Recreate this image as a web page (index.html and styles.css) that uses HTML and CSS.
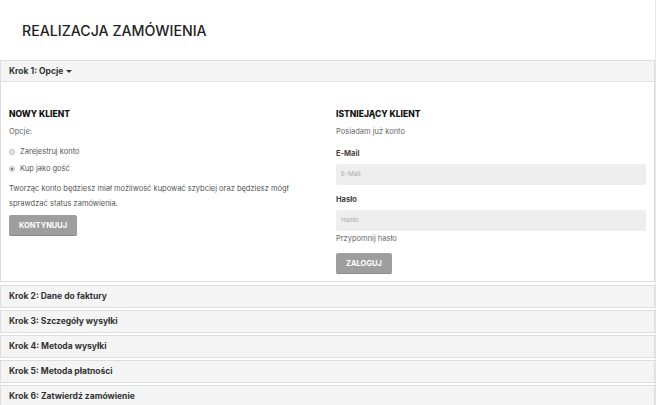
FILE: index.html
```html
<!DOCTYPE HTML>
<html>
<head>
<meta charset="utf-8">
<title>Realizacja zamówienia</title>
<link rel="stylesheet" href="styles.css">
</head>

<body>
<div class="page">
	<h1 class="title">REALIZACJA ZAMÓWIENIA</h1>

	<div class="panel open">
		<div class="panel-head">Krok 1: Opcje <span class="caret"></span></div>
		<div class="panel-body">
			<div class="col">
				<h2>NOWY KLIENT</h2>
				<p class="muted">Opcje:</p>
				<label class="radio"><span class="dot"></span>Zarejestruj konto</label>
				<label class="radio"><span class="dot on"></span>Kup jako gość</label>
				<p class="text">Tworząc konto będziesz miał możliwość kupować szybciej oraz będziesz mógł sprawdzać status zamówienia.</p>
				<a href="javascript:;" class="btn">KONTYNUUJ</a>
			</div>
			<div class="col">
				<h2>ISTNIEJĄCY KLIENT</h2>
				<p class="muted">Posiadam już konto</p>
				<label class="field-label">E-Mail</label>
				<div class="input">E-Mail</div>
				<label class="field-label">Hasło</label>
				<div class="input">Hasło</div>
				<a href="javascript:;" class="forgot">Przypomnij hasło</a>
				<a href="javascript:;" class="btn">ZALOGUJ</a>
			</div>
		</div>
	</div>

	<div class="panel"><div class="panel-head">Krok 2: Dane do faktury</div></div>
	<div class="panel"><div class="panel-head">Krok 3: Szczegóły wysyłki</div></div>
	<div class="panel"><div class="panel-head">Krok 4: Metoda wysyłki</div></div>
	<div class="panel"><div class="panel-head">Krok 5: Metoda płatności</div></div>
	<div class="panel"><div class="panel-head">Krok 6: Zatwierdź zamówienie</div></div>
</div>
</body>
</html>
```

FILE: styles.css
```css
* {margin:0; padding:0; box-sizing:border-box;}
body {font-family:"Inter","Liberation Sans",sans-serif; color:#555; background:#fff;}
a {text-decoration:none;}

.page {width:656px; border-right:1px solid #e6e6e6; min-height:405px;}
.title {font-size:14.2px; font-weight:500; color:#222; padding:22px 0 0 22px; height:60px;}

.panel {border:1px solid #ddd; margin-bottom:2px;}
.panel.open {margin-bottom:3px;}
.panel-head {height:21px; line-height:21px; padding-left:8px; background:#f4f4f4; font-size:8.5px; font-weight:700; color:#333;}
.open .panel-head {border-bottom:1px solid #e3e3e3;}
.caret {display:inline-block; width:0; height:0; border-left:3px solid transparent; border-right:3px solid transparent; border-top:3px solid #333; vertical-align:middle; margin-left:1px;}

.panel-body {display:grid; grid-template-columns:1fr 1fr; column-gap:17px; padding:27px 8px 7px 8px; height:199px;}
.col {display:flex; flex-direction:column; align-items:flex-start;}
.col h2 {font-size:8.5px; font-weight:800; color:#111; margin-bottom:8px; line-height:10px;}
.muted {font-size:7.5px; color:#666; line-height:10px; margin-bottom:11px;}
.radio {display:flex; align-items:center; font-size:7.5px; color:#555; line-height:10px; margin-bottom:8px; margin-top:-1px;}
.dot {width:6px; height:6px; border-radius:50%; border:1px solid #bbb; background:#e8e8e8; margin-right:5px; position:relative;}
.dot.on::after {content:""; position:absolute; left:1px; top:1px; width:2px; height:2px; border-radius:50%; background:#555;}
.text {font-size:7.5px; line-height:15px; color:#555; margin-top:-1px; margin-bottom:4px;}
.btn {display:inline-block; background:#9e9e9e; color:#fff; font-size:7.5px; font-weight:700; padding:0 10px; height:21px; line-height:21px; border-radius:2px; border-bottom:1px solid #8a8a8a;}
.field-label {font-size:7.5px; font-weight:700; color:#444; line-height:10px; margin-bottom:5px;}
.col .muted + .field-label {margin-top:1px;}
.input {width:100%; height:21px; line-height:21px; background:#eee; border-radius:2px; padding-left:5px; font-size:6.5px; color:#aaa; margin-bottom:10px;}
.forgot {font-size:7.5px; color:#666; margin-top:-7px; margin-bottom:10px;}
```
